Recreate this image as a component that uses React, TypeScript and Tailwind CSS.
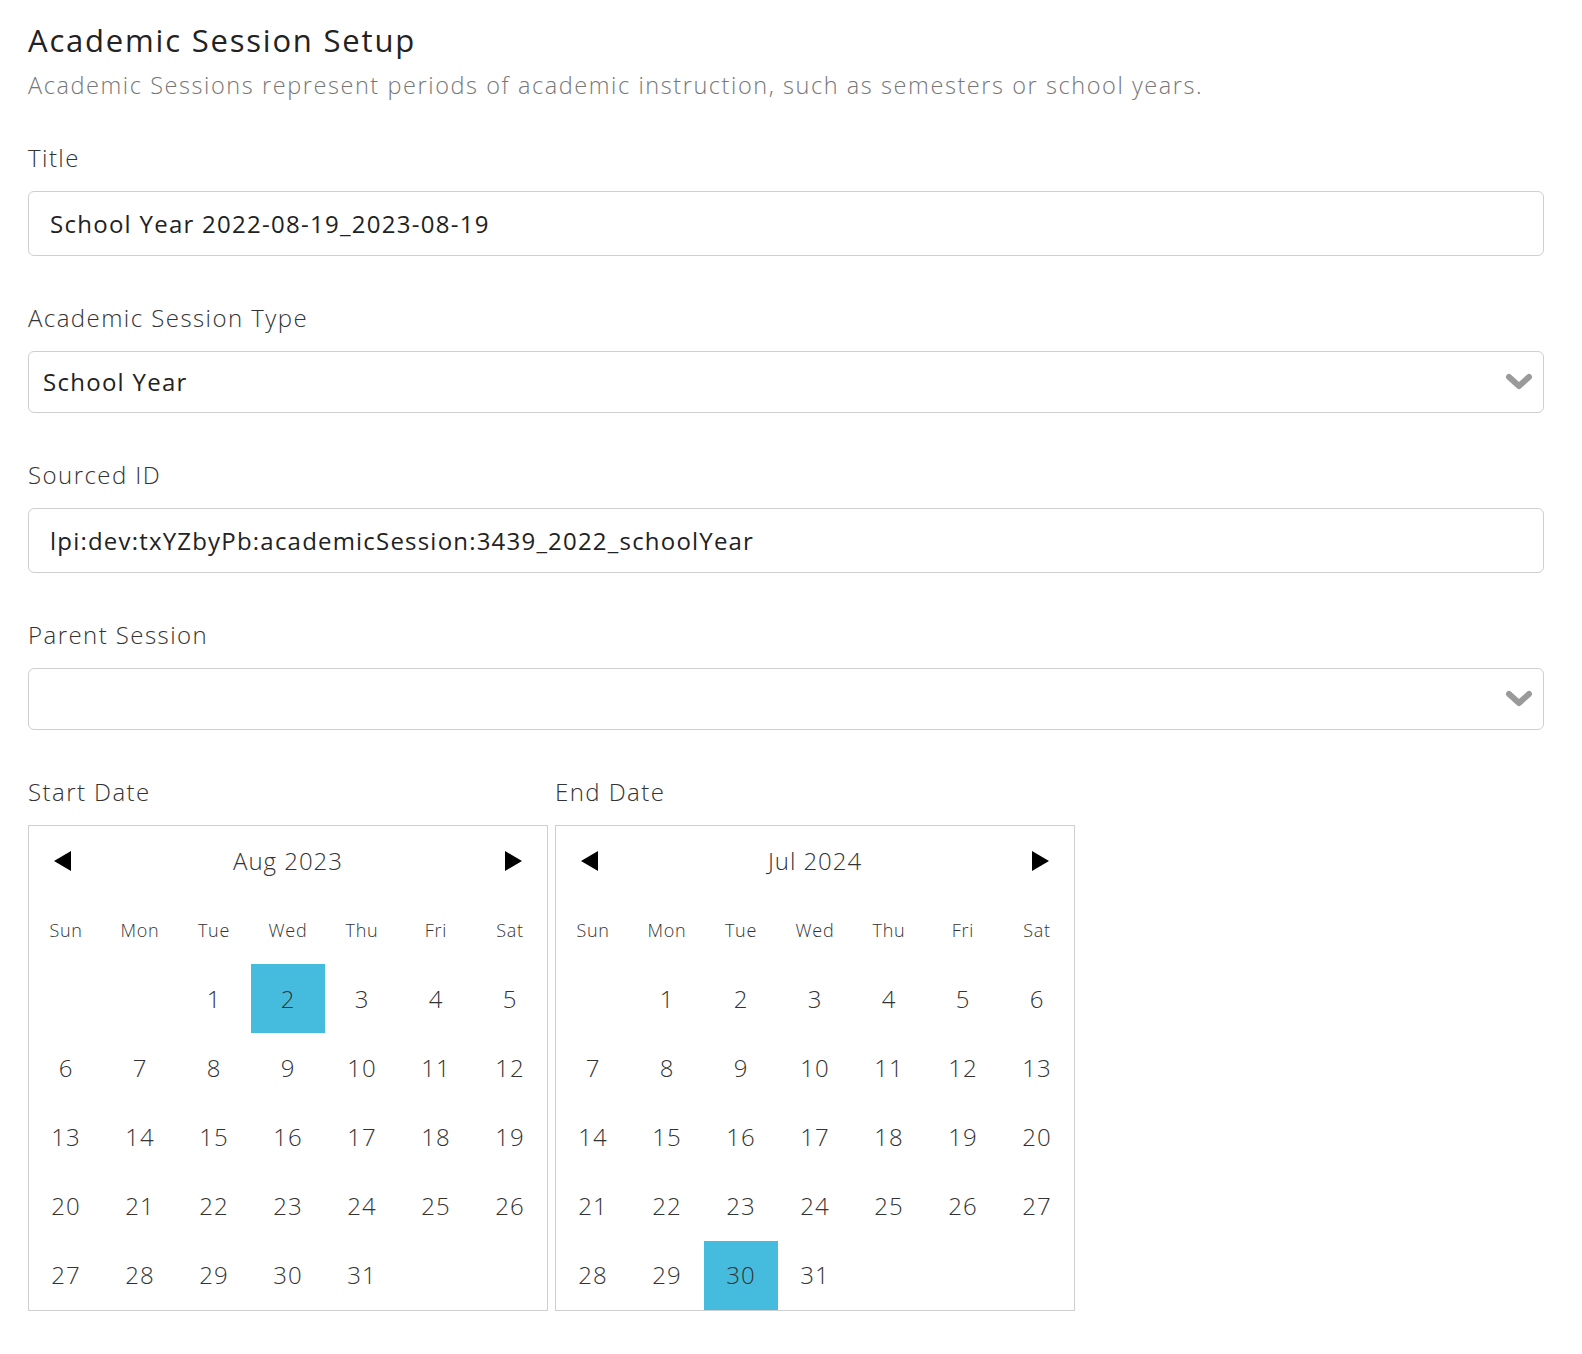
import React from "react";

const DAYS = ["Sun", "Mon", "Tue", "Wed", "Thu", "Fri", "Sat"];

function Chevron() {
    return (
        <svg width="28" height="20" viewBox="0 0 28 20" className="shrink-0">
            <path d="M4 5 L14 14 L24 5" fill="none" stroke="#9a9a9a" strokeWidth="6" strokeLinecap="round" strokeLinejoin="round" />
        </svg>
    );
}

function Arrow({ dir }: { dir: "left" | "right" }) {
    return (
        <svg width="17" height="20" viewBox="0 0 17 20">
            {dir === "left" ? <polygon points="17,0 17,20 0,10" fill="#000" /> : <polygon points="0,0 0,20 17,10" fill="#000" />}
        </svg>
    );
}

function Calendar({ title, offset, selected }: { title: string; offset: number; selected: number }) {
    const cells: (number | null)[] = [];
    for (let i = 0; i < offset; i++) cells.push(null);
    for (let d = 1; d <= 31; d++) cells.push(d);
    while (cells.length < 35) cells.push(null);

    return (
        <div className="w-[520px] border border-[#cfcfcf] bg-white">
            <div className="h-[70px] flex items-center justify-between px-[25px]">
                <Arrow dir="left" />
                <span className="text-[24px] font-light tracking-[0.04em] text-[#333]">{title}</span>
                <Arrow dir="right" />
            </div>
            <div className="grid grid-cols-7 h-[68px] items-center">
                {DAYS.map((d) => (
                    <div key={d} className="text-center text-[18px] font-light tracking-[0.04em] text-[#333]">
                        {d}
                    </div>
                ))}
            </div>
            <div className="grid grid-cols-7 grid-rows-5 h-[346px]">
                {cells.map((c, i) => (
                    <div
                        key={i}
                        className={`flex items-center justify-center text-[24px] font-light tracking-[0.04em] text-[#333] ${
                            c === selected ? "bg-[#45bcde]" : ""
                        }`}
                    >
                        {c ?? ""}
                    </div>
                ))}
            </div>
        </div>
    );
}

function Label({ children }: { children: React.ReactNode }) {
    return (
        <div className="h-[30px] leading-[30px] text-[24px] text-[#333] font-light tracking-[0.06em] mb-[18px]">
            {children}
        </div>
    );
}

export default function App() {
    return (
        <div className="min-h-screen bg-white pl-[28px] pr-[38px] pt-[20px] font-['Open_Sans',sans-serif]">
            <h1 className="h-[40px] leading-[40px] text-[31px] font-medium tracking-[0.058em] text-[#222]">
                Academic Session Setup
            </h1>
            <p className="h-[30px] leading-[30px] mt-[10px] text-[23.5px] font-light tracking-[0.067em] text-[#777]">
                Academic Sessions represent periods of academic instruction, such as semesters or school years.
            </p>

            <div className="mt-[43px]">
                <Label>Title</Label>
                <div className="h-[65px] border border-[#cfcfcf] rounded-[6px] flex items-center px-[21px] text-[24px] tracking-[0.053em] text-[#222]">
                    School Year 2022-08-19_2023-08-19
                </div>
            </div>

            <div className="mt-[47px]">
                <Label>Academic Session Type</Label>
                <div className="h-[62px] border border-[#cfcfcf] rounded-[6px] flex items-center justify-between pl-[14px] pr-[10px] text-[24px] tracking-[0.053em] text-[#222]">
                    <span>School Year</span>
                    <Chevron />
                </div>
            </div>

            <div className="mt-[47px]">
                <Label>Sourced ID</Label>
                <div className="h-[65px] border border-[#cfcfcf] rounded-[6px] flex items-center px-[21px] text-[24px] tracking-[0.05em] text-[#222]">
                    lpi:dev:txYZbyPb:academicSession:3439_2022_schoolYear
                </div>
            </div>

            <div className="mt-[47px]">
                <Label>Parent Session</Label>
                <div className="h-[62px] border border-[#cfcfcf] rounded-[6px] flex items-center justify-end pl-[14px] pr-[10px]">
                    <Chevron />
                </div>
            </div>

            <div className="mt-[47px] flex gap-[7px]">
                <div>
                    <Label>Start Date</Label>
                    <Calendar title="Aug 2023" offset={2} selected={2} />
                </div>
                <div>
                    <Label>End Date</Label>
                    <Calendar title="Jul 2024" offset={1} selected={30} />
                </div>
            </div>
        </div>
    );
}
